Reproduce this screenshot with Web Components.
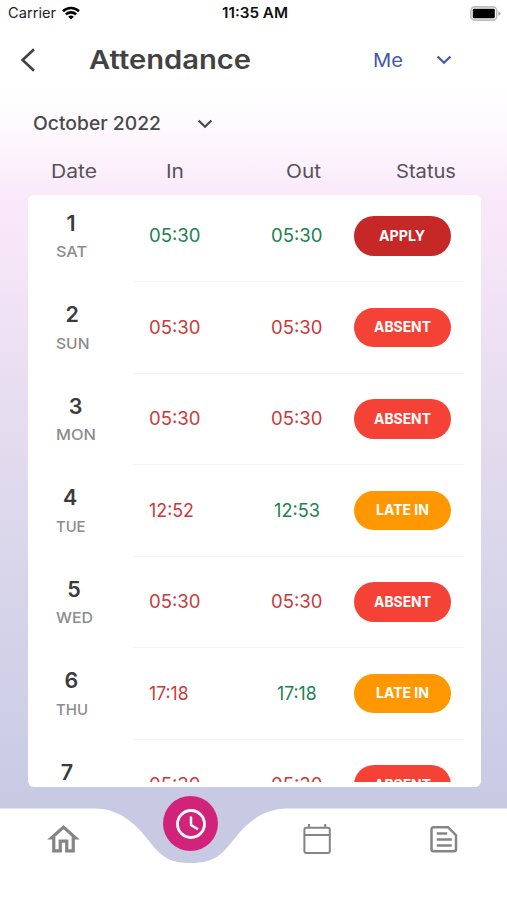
<!DOCTYPE html>
<html lang="en">
<head>
<meta charset="utf-8">
<title>Attendance</title>
<style>
  body {
    margin: 0;
    width: 507px;
    height: 900px;
    overflow: hidden;
    font-family: Inter, "Open Sans", sans-serif;
  }
</style>
</head>
<body>
<attendance-app></attendance-app>

<script>
// Shared helper: attach an open shadow root and fill it
function shadow(el, html) {
  el.attachShadow({ mode: 'open' }).innerHTML = html;
}

// Text label that stretches its letters to take up a given width
class FitText extends HTMLElement {
  constructor() {
    super();
    shadow(this, `
      <style>
        :host { display: block; white-space: nowrap; line-height: 1.2; }
        span { display: inline-block; transform-origin: 0 50%; }
      </style>
      <span><slot></slot></span>
    `);
  }

  connectedCallback() {
    const width = Number(this.getAttribute('w'));
    this.style.width = width + 'px';
    const span = this.shadowRoot.querySelector('span');
    const natural = span.getBoundingClientRect().width;
    if (natural > 0) span.style.transform = `scaleX(${width / natural})`;
  }
}
customElements.define('fit-text', FitText);

// Carrier, clock and battery
class StatusBar extends HTMLElement {
  constructor() {
    super();
    shadow(this, `
      <style>
        :host {
          display: grid;
          grid-template-columns: 1fr auto 1fr;
          align-items: center;
          height: 27px;
          padding: 0 6px 0 8px;
          font-size: 14px;
          color: #222;
        }
        .carrier { display: flex; align-items: center; gap: 6px; }
        .clock { font-weight: 600; color: #111; }
        .battery { justify-self: end; }
        svg { display: block; }
      </style>
      <div class="carrier">
        <fit-text w="48">Carrier</fit-text>
        <svg width="18" height="14" viewBox="0 0 18 14" fill="none" stroke="#000" stroke-width="2.6">
          <path d="M1 5.2a11.6 11.6 0 0 1 16 0"/>
          <path d="M3.9 8.4a7.4 7.4 0 0 1 10.2 0"/>
          <path d="M9 13.6 6.2 10.8a4 4 0 0 1 5.6 0z" fill="#000" stroke="none"/>
        </svg>
      </div>
      <fit-text class="clock" w="66">11:35 AM</fit-text>
      <svg class="battery" width="31" height="15" viewBox="0 0 31 15">
        <rect x=".9" y=".9" width="25.8" height="13.2" rx="3.6" fill="#fff" stroke="#bdbdbd" stroke-width="1.6"/>
        <rect x="2.8" y="2.8" width="22" height="9.4" rx="1.4"/>
        <path d="M28.4 5.2q2.2 1 2.2 2.3t-2.2 2.3z" fill="#aaa"/>
      </svg>
    `);
  }
}
customElements.define('status-bar', StatusBar);

// Small down arrow used by both pickers
class DownArrow extends HTMLElement {
  constructor() {
    super();
    shadow(this, `
      <style>
        :host { display: block; }
        svg { display: block; }
      </style>
      <svg width="16" height="10" viewBox="0 0 16 10" fill="none" stroke="currentColor" stroke-width="2.2">
        <path d="M1.6 1.5 8 7.8l6.4-6.3"/>
      </svg>
    `);
  }
}
customElements.define('down-arrow', DownArrow);

// Back button, page title and person picker
class PageHeader extends HTMLElement {
  connectedCallback() {
    shadow(this, `
      <style>
        :host {
          display: flex;
          align-items: center;
          height: 65px;
          padding: 0 55px 0 19.5px;
          color: #424242;
        }
        .title { margin-left: 53.5px; font-size: 26px; font-weight: 600; }
        .person {
          display: flex;
          align-items: center;
          gap: 33px;
          margin-left: auto;
          font-size: 18.5px;
          color: #4557ae;
        }
        .person fit-text { margin-top: 1px; }
      </style>
      <svg width="16" height="26" viewBox="0 0 16 26" fill="none" stroke="currentColor" stroke-width="2.6">
        <path d="M14 2.2 2.6 13 14 23.8"/>
      </svg>
      <fit-text class="title" w="162">${this.getAttribute('heading')}</fit-text>
      <div class="person">
        <fit-text w="30">Me</fit-text>
        <down-arrow></down-arrow>
      </div>
    `);
  }
}
customElements.define('page-header', PageHeader);

class MonthPicker extends HTMLElement {
  constructor() {
    super();
    shadow(this, `
      <style>
        :host {
          display: flex;
          align-items: center;
          gap: 36px;
          height: 63px;
          padding-left: 33px;
          font-size: 18.5px;
          font-weight: 500;
          color: #4a484b;
        }
      </style>
      <fit-text w="128">October 2022</fit-text>
      <down-arrow></down-arrow>
    `);
  }
}
customElements.define('month-picker', MonthPicker);

class ColumnTitles extends HTMLElement {
  constructor() {
    super();
    shadow(this, `
      <style>
        :host {
          display: grid;
          grid-template-columns: 115px 120px 110px 61px;
          align-items: center;
          height: 32px;
          margin-bottom: 7.5px;
          padding-left: 50.5px;
          font-size: 18.5px;
          color: #565258;
        }
      </style>
      <fit-text w="46">Date</fit-text>
      <fit-text w="18">In</fit-text>
      <fit-text w="35">Out</fit-text>
      <fit-text w="60">Status</fit-text>
    `);
  }
}
customElements.define('column-titles', ColumnTitles);

// Rounded status badge
const STATUS = {
  APPLY: { color: '#c62828', width: 46 },
  ABSENT: { color: '#f44336', width: 57 },
  'LATE IN': { color: '#ff9800', width: 53 }
};

class StatusPill extends HTMLElement {
  connectedCallback() {
    const kind = this.getAttribute('kind');
    const { color, width } = STATUS[kind];
    shadow(this, `
      <style>
        :host {
          display: flex;
          align-items: center;
          justify-content: center;
          width: 96.5px;
          height: 39.5px;
          border-radius: 20px;
          background: ${color};
          color: #fff;
          font-size: 14px;
          font-weight: 700;
        }
        fit-text { margin-top: 1px; }
      </style>
      <fit-text w="${width}">${kind}</fit-text>
    `);
  }
}
customElements.define('status-pill', StatusPill);

const GREEN = '#1b8250';
const RED = '#c83a3a';
const TIME_WIDTH = { '05:30': 51.5, '12:52': 45, '12:53': 46, '17:18': 39.5 };
const DAY_WIDTH = { SAT: 31, SUN: 33.5, MON: 40, TUE: 29.5, WED: 37, THU: 32, '': 23 };

// One day: number, weekday, in/out times and status
class DayRow extends HTMLElement {
  connectedCallback() {
    const { date, day, timeIn, inColor, timeOut, outColor, status } = this.entry;
    shadow(this, `
      <style>
        :host {
          display: grid;
          grid-template-columns: 105px 331.5px;
          height: 91.5px;
        }
        .day {
          display: flex;
          flex-direction: column;
          align-items: center;
          justify-self: start;
          padding: 23px 0 0 28px;
        }
        .date { font-size: 21.5px; font-weight: 600; line-height: 19px; color: #3b3b3b; }
        .name { margin-top: 10.5px; font-size: 15px; font-weight: 500; color: #8c8c8c; }
        .info {
          display: grid;
          grid-template-columns: 96px 1fr 97px;
          align-items: center;
          padding: 0 13px 0 16px;
          border-bottom: 1px solid #f5f5f5;
          font-size: 18.5px;
        }
        .info fit-text { margin-top: -1px; }
        .out { justify-self: center; margin-right: 5px; }
      </style>
      <div class="day">
        <div class="date">${date}</div>
        <fit-text class="name" w="${DAY_WIDTH[day]}">${day}</fit-text>
      </div>
      <div class="info">
        <fit-text w="${TIME_WIDTH[timeIn]}" style="color: ${inColor}">${timeIn}</fit-text>
        <fit-text class="out" w="${TIME_WIDTH[timeOut]}" style="color: ${outColor}">${timeOut}</fit-text>
        <status-pill kind="${status}"></status-pill>
      </div>
    `);
  }
}
customElements.define('day-row', DayRow);

const DAYS = [
  [1, 'SAT', '05:30', GREEN, '05:30', GREEN, 'APPLY'],
  [2, 'SUN', '05:30', RED, '05:30', RED, 'ABSENT'],
  [3, 'MON', '05:30', RED, '05:30', RED, 'ABSENT'],
  [4, 'TUE', '12:52', RED, '12:53', GREEN, 'LATE IN'],
  [5, 'WED', '05:30', RED, '05:30', RED, 'ABSENT'],
  [6, 'THU', '17:18', RED, '17:18', GREEN, 'LATE IN'],
  [7, '', '05:30', RED, '05:30', RED, 'ABSENT']
];

class AttendanceList extends HTMLElement {
  connectedCallback() {
    shadow(this, `
      <style>
        :host {
          display: block;
          box-sizing: border-box;
          width: 453px;
          height: 592px;
          margin-left: 27.5px;
          padding-bottom: 5px;
          border-radius: 6px;
          background: #fff;
        }
        .scroller { height: 587px; overflow: hidden; }
        .rows { margin-top: -4px; }
      </style>
      <div class="scroller"><div class="rows"></div></div>
    `);
    const rows = this.shadowRoot.querySelector('.rows');
    for (const [date, day, timeIn, inColor, timeOut, outColor, status] of DAYS) {
      const row = document.createElement('day-row');
      row.entry = { date, day, timeIn, inColor, timeOut, outColor, status };
      rows.appendChild(row);
    }
  }
}
customElements.define('attendance-list', AttendanceList);

// Bottom navigation with a notch for the active clock button
class BottomNav extends HTMLElement {
  constructor() {
    super();
    shadow(this, `
      <style>
        :host { display: block; position: relative; height: 92px; margin-top: auto; }
        svg { display: block; }
        .shape { position: absolute; inset: 0; }
        .items {
          position: relative;
          display: grid;
          grid-template: 62px / repeat(4, 1fr);
          justify-items: center;
          align-items: center;
          color: #858585;
        }
        /* the button rises above the bar's icon row */
        .active {
          display: grid;
          place-items: center;
          width: 55px;
          height: 55px;
          margin: 0 0 31px 1px;
          border-radius: 50%;
          background: #d1237a;
          color: #fff;
        }
      </style>
      <svg class="shape" width="507" height="92" viewBox="0 0 507 92">
        <path fill="#fff" d="M0 .5H94C118 .5 134 14 147 30.5 160 47 167 55 190.8 55 214.6 55 221.6 47 234.6 30.5 247.6 14 263.6.5 287.6.5H507V92H0z"/>
      </svg>
      <div class="items">
        <svg width="39" height="39" viewBox="0 0 24 24" fill="currentColor">
          <path d="m12 5.69 5 4.5V18h-2v-6H9v6H7v-7.81l5-4.5M12 3 2 12h3v8h6v-6h2v6h6v-8h3z"/>
        </svg>
        <div class="active">
          <svg width="36" height="36" viewBox="0 0 36 36" fill="none" stroke="currentColor" stroke-width="2.8">
            <circle cx="18" cy="18" r="13.5"/>
            <path d="M18 10.5V19l7 4.2" stroke-width="2.5"/>
          </svg>
        </div>
        <svg width="30" height="32" viewBox="0 0 30 32" fill="none" stroke="currentColor" stroke-width="2">
          <rect x="2.4" y="4.8" width="25.4" height="25.2" rx="2"/>
          <path d="M2.4 12h25.4M7 1v3.5M23.2 1v3.5"/>
        </svg>
        <svg width="30" height="30" viewBox="0 0 30 30" fill="none" stroke="currentColor" stroke-width="2.5">
          <path d="M4.5 3.2H19l8 8v14.1a2 2 0 0 1-2 2H4.5a2 2 0 0 1-2-2V5.2a2 2 0 0 1 2-2z"/>
          <path d="M7.8 9.5h10.4M7.8 15.5h15M7.8 21.5h15" stroke-width="2.3"/>
        </svg>
      </div>
    `);
  }
}
customElements.define('bottom-nav', BottomNav);

class AttendanceApp extends HTMLElement {
  constructor() {
    super();
    shadow(this, `
      <style>
        :host {
          display: flex;
          flex-direction: column;
          height: 900px;
          background: linear-gradient(#fff 85px, #fefafe 125px, #fcf2fc 160px, #fae9fb 195px,
            #f1e3f5 300px, #e4dcef 430px, #d8d5ea 580px, #cecee7 720px, #c8cae4 800px, #c8cae4 870px);
        }
      </style>
      <status-bar></status-bar>
      <page-header heading="Attendance"></page-header>
      <month-picker></month-picker>
      <column-titles></column-titles>
      <attendance-list></attendance-list>
      <bottom-nav></bottom-nav>
    `);
  }
}
customElements.define('attendance-app', AttendanceApp);
</script>
</body>
</html>
